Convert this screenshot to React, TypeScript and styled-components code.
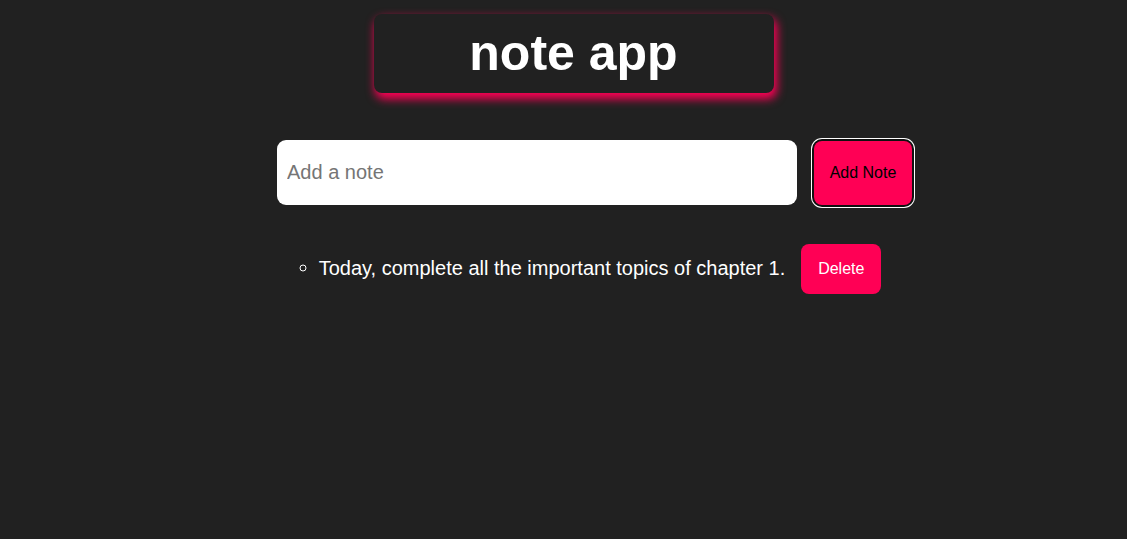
import React, { useState } from "react";
import styled, { createGlobalStyle } from "styled-components";

const GlobalStyle = createGlobalStyle`
  html, body {
    margin: 0;
    padding: 0;
    background: #212121;
    font-family: "Liberation Sans", Arial, sans-serif;
  }
`;

const Page = styled.div`
  min-height: 539px;
  background: #212121;
  display: flex;
  flex-direction: column;
`;

const HeaderRow = styled.header`
  display: flex;
  justify-content: center;
  padding-left: 20px;
  margin-top: 14px;
`;

const TitleBox = styled.div`
  width: 400px;
  height: 79px;
  border-radius: 8px;
  background: #212121;
  box-shadow: 2px 5px 10px 1px #ff0055;
  display: flex;
  align-items: center;
  justify-content: center;
`;

const Title = styled.h1`
  margin: 0;
  color: #ffffff;
  font-size: 50px;
  font-weight: 700;
  font-family: "Liberation Sans", Arial, sans-serif;
  line-height: 1;
  padding-bottom: 2px;
`;

const Form = styled.form`
  display: flex;
  justify-content: center;
  align-items: center;
  gap: 17px;
  padding-left: 62px;
  margin-top: 47px;
`;

const NoteInput = styled.input`
  width: 520px;
  height: 65px;
  box-sizing: border-box;
  border: none;
  border-radius: 9px;
  padding: 0 10px;
  font-size: 20px;
  font-family: "Liberation Sans", Arial, sans-serif;
  color: #000;
  background: #fff;
  outline: none;
  &::placeholder {
    color: #757575;
  }
`;

const Button = styled.button<{ $w: number; $h: number; $dark?: boolean; $ring?: boolean }>`
  width: ${(p) => p.$w}px;
  height: ${(p) => p.$h}px;
  border: none;
  border-radius: 8px;
  background: #ff0055;
  color: ${(p) => (p.$dark ? "#000" : "#fff")};
  font-size: 16px;
  font-family: "Liberation Sans", Arial, sans-serif;
  cursor: pointer;
  padding: 0;
  flex-shrink: 0;
  box-shadow: ${(p) => (p.$ring ? "0 0 0 2px #101010, 0 0 0 3px #fff" : "none")};
`;

const ListRow = styled.div`
  display: flex;
  justify-content: center;
  padding-left: 73px;
  margin-top: 37px;
`;

const List = styled.ul`
  margin: 0;
  padding: 0;
  list-style-type: circle;
  color: #fff;
`;

const Item = styled.li`
  font-size: 20px;
  color: #fff;
  line-height: 50px;
`;

const ItemText = styled.span`
  vertical-align: middle;
  position: relative;
  top: -1px;
`;

const DeleteButton = styled(Button)`
  margin-left: 16px;
  vertical-align: middle;
`;

export default function App() {
  const [text, setText] = useState("");
  const [notes, setNotes] = useState<string[]>([
    "Today, complete all the important topics of chapter 1.",
  ]);

  return (
    <>
      <GlobalStyle />
      <Page>
        <HeaderRow>
          <TitleBox>
            <Title>note app</Title>
          </TitleBox>
        </HeaderRow>
        <Form
          onSubmit={(e) => {
            e.preventDefault();
            if (text.trim()) {
              setNotes([...notes, text.trim()]);
              setText("");
            }
          }}
        >
          <NoteInput
            placeholder="Add a note"
            value={text}
            onChange={(e) => setText(e.target.value)}
          />
          <Button type="submit" $w={98} $h={64} $dark $ring>
            Add Note
          </Button>
        </Form>
        <ListRow>
          <List>
            {notes.map((n, i) => (
              <Item key={i}>
                <ItemText>{n}</ItemText>
                <DeleteButton
                  type="button"
                  $w={80}
                  $h={50}
                  onClick={() => setNotes(notes.filter((_, j) => j !== i))}
                >
                  Delete
                </DeleteButton>
              </Item>
            ))}
          </List>
        </ListRow>
      </Page>
    </>
  );
}
